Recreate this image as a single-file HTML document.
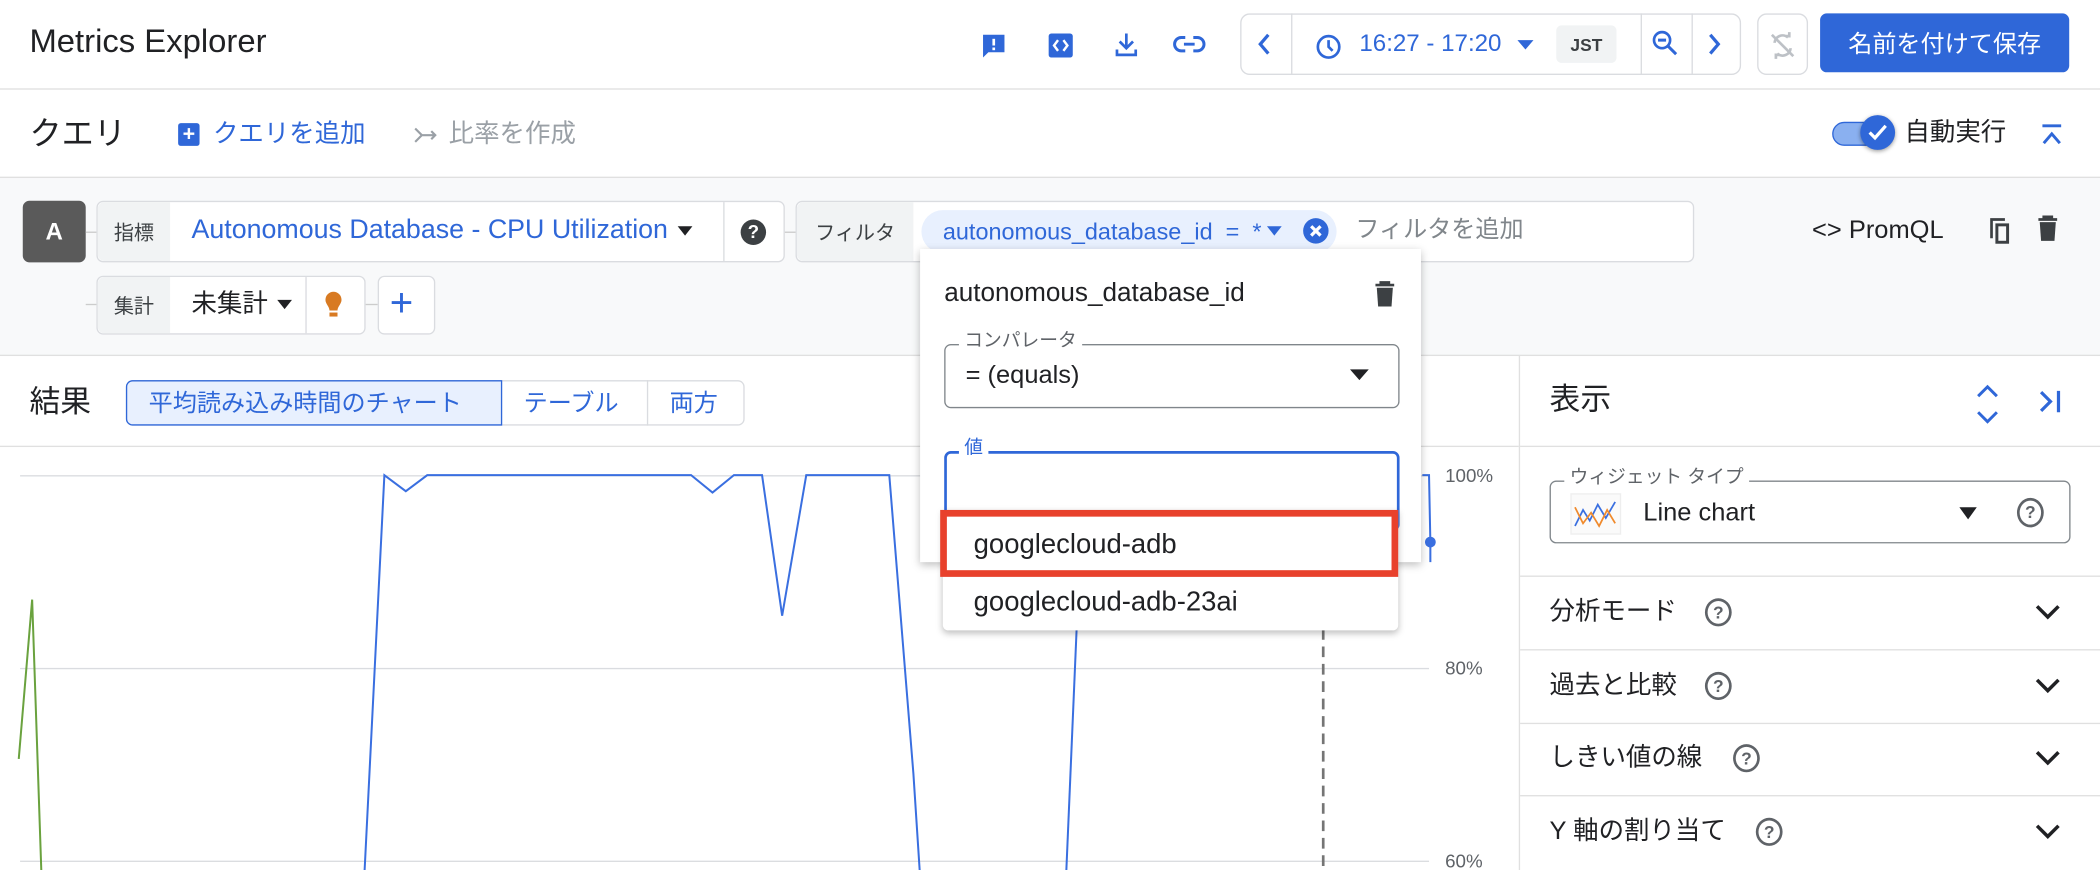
<!DOCTYPE html>
<html><head><meta charset="utf-8"><style>
*{box-sizing:border-box;margin:0;padding:0}
html,body{width:2100px;height:870px;overflow:hidden;background:#fff}
body{font-family:"Liberation Sans","Noto Sans CJK JP",sans-serif;color:#202124}
#w{position:absolute;left:0;top:0;width:1568px;height:650px;transform:scale(1.33929,1.33846);transform-origin:0 0;overflow:hidden}
.a{position:absolute}
.t{position:absolute;white-space:nowrap;line-height:1}
.blue{color:#2f67d8}
.box{position:absolute;border:1px solid #dadce0;border-radius:5px;background:#fff}
.lbl{position:absolute;background:#f1f3f4;color:#3c4043;font-size:15px;display:flex;align-items:center;justify-content:center;border-radius:5px 0 0 5px}
.hl{position:absolute;height:1px;background:#dadce0}
.acc{position:absolute;left:1135px;width:433px;height:1px;background:#e0e0e0}
svg{position:absolute;overflow:visible}
</style></head><body><div id="w">
<!-- top bar -->
<div class="t" style="left:22px;top:20px;font-size:24.5px">Metrics Explorer</div>
<svg style="left:732px;top:24px" width="20" height="20" viewBox="0 0 20 20"><path d="M2 2h16v13H6l-4 4z" fill="#2f67d8"/><rect x="9" y="5" width="2" height="5" fill="#fff"/><rect x="9" y="11.5" width="2" height="2" fill="#fff"/></svg>
<svg style="left:782px;top:24px" width="20" height="20" viewBox="0 0 20 20"><rect x="1" y="1" width="18" height="18" rx="2" fill="#2f67d8"/><path d="M8 6l-3 4 3 4M12 6l3 4-3 4" stroke="#fff" stroke-width="1.8" fill="none"/></svg>
<svg style="left:831px;top:23px" width="20" height="20" viewBox="0 0 20 20"><path d="M10 2v11M5 8l5 5 5-5M3 14v4h14v-4" stroke="#2f67d8" stroke-width="2" fill="none"/></svg>
<svg style="left:876px;top:23px" width="24" height="20" viewBox="0 0 24 20"><path d="M9 5H6a5 5 0 0 0 0 10h3M15 5h3a5 5 0 0 1 0 10h-3M8 10h8" stroke="#2f67d8" stroke-width="2.2" fill="none"/></svg>
<div class="box" style="left:926px;top:10px;width:374px;height:46px;border-radius:7px"></div>
<div class="a" style="left:964px;top:10px;width:1px;height:46px;background:#dadce0"></div>
<div class="a" style="left:1225px;top:10px;width:1px;height:46px;background:#dadce0"></div>
<div class="a" style="left:1263px;top:10px;width:1px;height:46px;background:#dadce0"></div>
<svg style="left:938px;top:24px" width="12" height="18" viewBox="0 0 12 18"><path d="M9 2L3 9l6 7" stroke="#2f67d8" stroke-width="2.4" fill="none"/></svg>
<svg style="left:982px;top:25px" width="20" height="20" viewBox="0 0 20 20"><circle cx="10" cy="10" r="8" stroke="#2f67d8" stroke-width="2" fill="none"/><path d="M10 5v5l3 3" stroke="#2f67d8" stroke-width="2" fill="none"/></svg>
<div class="t blue" style="left:1015px;top:23px;font-size:18px">16:27 - 17:20</div>
<svg style="left:1133px;top:30px" width="12" height="8"><path d="M0 0h12L6 7z" fill="#2f67d8"/></svg>
<div class="a" style="left:1162px;top:19px;width:45px;height:28px;background:#f1f3f4;border-radius:4px;font-size:13px;font-weight:bold;color:#3c4043;display:flex;align-items:center;justify-content:center">JST</div>
<svg style="left:1233px;top:22px" width="22" height="22" viewBox="0 0 22 22"><circle cx="8" cy="8" r="6" stroke="#2f67d8" stroke-width="2" fill="none"/><path d="M5 8h6M12.5 12.5l6 6" stroke="#2f67d8" stroke-width="2.2"/></svg>
<svg style="left:1274px;top:24px" width="12" height="18" viewBox="0 0 12 18"><path d="M3 2l6 7-6 7" stroke="#2f67d8" stroke-width="2.4" fill="none"/></svg>
<div class="box" style="left:1312px;top:10px;width:38px;height:46px;border-radius:7px"></div>
<svg style="left:1320px;top:23px" width="22" height="22" viewBox="0 0 22 22"><path d="M5 9a6 6 0 0 1 10-4M17 13a6 6 0 0 1-10 4M3 3l16 16M13 4h3v-3M9 18H6v3" stroke="#bdc1c6" stroke-width="2" fill="none"/></svg>
<div class="a" style="left:1359px;top:10px;width:186px;height:44px;background:#2f67d8;border-radius:5px;color:#fff;font-size:18px;display:flex;align-items:center;justify-content:center">名前を付けて保存</div>
<div class="hl" style="left:0;top:66px;width:1568px;background:#e0e0e0"></div>
<!-- row 2 -->
<div class="t" style="left:22px;top:89px;font-size:24px">クエリ</div>
<div class="a" style="left:133px;top:92px;width:16px;height:17px;background:#2f67d8;border-radius:2px;color:#fff;font-size:16px;font-weight:bold;line-height:17px;text-align:center">+</div>
<div class="t blue" style="left:159px;top:91px;font-size:19px">クエリを追加</div>
<svg style="left:309px;top:94px" width="18" height="14" viewBox="0 0 18 14"><path d="M1 2l5 5-5 5M6 7h10M13 4l3 3-3 3" stroke="#9aa0a6" stroke-width="1.6" fill="none"/></svg>
<div class="t" style="left:335px;top:91px;font-size:19px;color:#9aa0a6">比率を作成</div>
<div class="a" style="left:1368px;top:91px;width:40px;height:18px;background:#8ab0f0;border-radius:9px;border:1px solid #2f67d8"></div>
<div class="a" style="left:1389px;top:86px;width:26px;height:26px;background:#2f67d8;border-radius:50%;box-shadow:0 1px 3px rgba(0,0,0,.4)"></div>
<svg style="left:1394px;top:91px" width="16" height="16"><path d="M2 8l4 4 8-9" stroke="#fff" stroke-width="2.4" fill="none"/></svg>
<div class="t" style="left:1422px;top:90px;font-size:19px">自動実行</div>
<svg style="left:1523px;top:92px" width="18" height="18"><path d="M2 2h14M3 15l6-7 6 7" stroke="#2f67d8" stroke-width="2.2" fill="none"/></svg>
<div class="a" style="left:0;top:132px;width:1568px;height:134px;background:#f8f9fa;border-top:1px solid #e0e0e0;border-bottom:1px solid #e0e0e0"></div>
<!-- query row -->
<div class="a" style="left:17px;top:150px;width:47px;height:46px;background:#5a5a5a;border-radius:5px;color:#fff;font-size:18px;font-weight:bold;display:flex;align-items:center;justify-content:center">A</div>
<div class="hl" style="left:64px;top:173px;width:8px;background:#ccc"></div>
<div class="box" style="left:72px;top:150px;width:514px;height:46px"></div>
<div class="lbl" style="left:73px;top:151px;width:54px;height:44px">指標</div>
<div class="t blue" style="left:143px;top:162px;font-size:20px">Autonomous Database - CPU Utilization</div>
<svg style="left:506px;top:169px" width="11" height="7"><path d="M0 0h11L5.5 7z" fill="#202124"/></svg>
<div class="a" style="left:540px;top:151px;width:1px;height:44px;background:#dadce0"></div>
<div class="a" style="left:553px;top:164px;width:19px;height:19px;border-radius:50%;background:#3c4043;color:#fff;font-size:14px;font-weight:bold;text-align:center;line-height:19px">?</div>
<div class="hl" style="left:586px;top:173px;width:8px;background:#ccc"></div>
<div class="box" style="left:594px;top:150px;width:671px;height:46px"></div>
<div class="lbl" style="left:595px;top:151px;width:87px;height:44px">フィルタ</div>
<div class="a" style="left:688px;top:157px;width:310px;height:32px;background:#e8f0fe;border-radius:16px"></div>
<div class="t blue" style="left:704px;top:165px;font-size:17.5px">autonomous_database_id&nbsp; = &nbsp;*</div>
<svg style="left:946px;top:169px" width="11" height="7"><path d="M0 0h11L5.5 7z" fill="#2f67d8"/></svg>
<div class="a" style="left:973px;top:163px;width:19px;height:19px;border-radius:50%;background:#2f67d8"></div>
<svg style="left:973px;top:163px" width="19" height="19"><path d="M6 6l7 7M13 6l-7 7" stroke="#fff" stroke-width="2.4"/></svg>
<div class="t" style="left:1012px;top:162px;font-size:18px;color:#80868b">フィルタを追加</div>
<div class="t" style="left:1353px;top:163px;font-size:19px;color:#202124">&lt;&gt; PromQL</div>
<svg style="left:1484px;top:161px" width="18" height="22" viewBox="0 0 18 22"><path d="M3 17V3h10" stroke="#3c4043" stroke-width="2" fill="none"/><rect x="7" y="7" width="8" height="13" stroke="#3c4043" stroke-width="2.2" fill="none"/></svg>
<svg style="left:1521px;top:161px" width="16" height="20" viewBox="0 0 16 20"><path d="M1 3h14M5 3V1h6v2" stroke="#3c4043" stroke-width="2" fill="none"/><path d="M2 5h12l-1 14H3z" fill="#3c4043"/></svg>
<div class="hl" style="left:64px;top:227px;width:8px;background:#ccc"></div>
<div class="box" style="left:72px;top:206px;width:201px;height:44px"></div>
<div class="lbl" style="left:73px;top:207px;width:54px;height:42px">集計</div>
<div class="t" style="left:143px;top:218px;font-size:19px">未集計</div>
<svg style="left:207px;top:224px" width="11" height="7"><path d="M0 0h11L5.5 7z" fill="#202124"/></svg>
<div class="a" style="left:228px;top:207px;width:1px;height:42px;background:#dadce0"></div>
<svg style="left:242px;top:217px" width="14" height="22" viewBox="0 0 14 22"><path d="M7 1a6 6 0 0 0-6 6c0 3 3 5 3 8h6c0-3 3-5 3-8a6 6 0 0 0-6-6z" fill="#d87a22"/><rect x="4" y="16.5" width="6" height="3" fill="#d87a22"/></svg>
<div class="hl" style="left:273px;top:227px;width:9px;background:#ccc"></div>
<div class="box" style="left:282px;top:206px;width:43px;height:44px"></div>
<div class="t blue" style="left:291px;top:212px;font-size:30px">+</div>
<!-- results -->
<div class="t" style="left:22px;top:289px;font-size:23px">結果</div>
<div class="box" style="left:94px;top:284px;width:462px;height:34px;border-radius:5px"></div>
<div class="a" style="left:94px;top:284px;width:281px;height:34px;background:#e8f0fe;border:1px solid #2f67d8;border-radius:5px 0 0 5px"></div>
<div class="a" style="left:483px;top:284px;width:1px;height:34px;background:#dadce0"></div>
<div class="t blue" style="left:111px;top:292px;font-size:18px">平均読み込み時間のチャート</div>
<div class="t blue" style="left:391px;top:292px;font-size:18px">テーブル</div>
<div class="t blue" style="left:500px;top:292px;font-size:18px">両方</div>
<div class="hl" style="left:0;top:333px;width:1134px;background:#e0e0e0"></div>
<!-- chart -->
<div class="hl" style="left:15px;top:355px;width:1052px"></div>
<div class="hl" style="left:15px;top:499px;width:1052px"></div>
<div class="hl" style="left:15px;top:643px;width:1052px"></div>
<div class="t" style="left:1079px;top:348px;font-size:14px;color:#5f6368">100%</div>
<div class="t" style="left:1079px;top:492px;font-size:14px;color:#5f6368">80%</div>
<div class="t" style="left:1079px;top:636px;font-size:14px;color:#5f6368">60%</div>
<svg style="left:0;top:0" width="1568" height="650">
<path d="M14 567L24 448L31 655" stroke="#6aa23e" stroke-width="1.5" fill="none"/>
<path d="M272 655L287 355L303 367L319 355L516 355L532 368L548 355L569 355L584 460L602 355L664 355L682 578L687 655" stroke="#3a6fe0" stroke-width="1.5" fill="none"/>
<path d="M796 655L806 420" stroke="#3a6fe0" stroke-width="1.5" fill="none"/>
<path d="M1062 355L1067 355L1068 405L1068 420" stroke="#3a6fe0" stroke-width="1.5" fill="none"/>
<circle cx="1068" cy="405" r="4" fill="#3a6fe0"/>
<path d="M988 470V650" stroke="#757575" stroke-width="2" stroke-dasharray="8 5"/>
</svg>
<!-- right panel -->
<div class="a" style="left:1134px;top:266px;width:1px;height:384px;background:#e0e0e0"></div>
<div class="t" style="left:1157px;top:287px;font-size:23px">表示</div>
<svg style="left:1475px;top:287px" width="18" height="30"><path d="M2 9l7-7 7 7M2 21l7 7 7-7" stroke="#2f67d8" stroke-width="2.2" fill="none"/></svg>
<svg style="left:1522px;top:290px" width="18" height="20"><path d="M2 3l7 7-7 7M15 2v16" stroke="#2f67d8" stroke-width="2.4" fill="none"/></svg>
<div class="hl" style="left:1135px;top:333px;width:433px;background:#e0e0e0"></div>
<div class="a" style="left:1157px;top:359px;width:389px;height:47px;border:1px solid #80868b;border-radius:5px"></div>
<div class="t" style="left:1168px;top:349px;font-size:14px;color:#5f6368;background:#fff;padding:0 4px">ウィジェット タイプ</div>
<svg style="left:1173px;top:369px" width="37" height="30"><rect width="37" height="30" fill="#fafafa" stroke="#eee"/><path d="M3 24L9 12L14 20L20 8L26 18L33 6" stroke="#3a6fe0" stroke-width="1.3" fill="none"/><path d="M3 10L9 22L15 14L21 24L27 12L33 22" stroke="#f08a2c" stroke-width="1.3" fill="none"/></svg>
<div class="t" style="left:1227px;top:374px;font-size:19px">Line chart</div>
<svg style="left:1463px;top:379px" width="13" height="9"><path d="M0 0h13L6.5 9z" fill="#202124"/></svg>
<div class="a" style="left:1506px;top:372px;width:20px;height:22px;border:2px solid #5f6368;border-radius:50%;font-size:13px;text-align:center;line-height:18px;color:#5f6368;font-weight:bold">?</div>
<div class="acc" style="top:430px"></div>
<div class="t" style="left:1157px;top:448px;font-size:19px">分析モード</div>
<div class="acc" style="top:485px"></div>
<div class="t" style="left:1157px;top:503px;font-size:19px">過去と比較</div>
<div class="acc" style="top:540px"></div>
<div class="t" style="left:1157px;top:557px;font-size:19px">しきい値の線</div>
<div class="acc" style="top:594px"></div>
<div class="t" style="left:1157px;top:612px;font-size:19px">Y 軸の割り当て</div>
<div class="a" style="left:1273px;top:447px;width:20px;height:21px;border:2px solid #5f6368;border-radius:50%;font-size:13px;text-align:center;line-height:17px;color:#5f6368;font-weight:bold">?</div>
<div class="a" style="left:1273px;top:502px;width:20px;height:21px;border:2px solid #5f6368;border-radius:50%;font-size:13px;text-align:center;line-height:17px;color:#5f6368;font-weight:bold">?</div>
<div class="a" style="left:1294px;top:556px;width:20px;height:21px;border:2px solid #5f6368;border-radius:50%;font-size:13px;text-align:center;line-height:17px;color:#5f6368;font-weight:bold">?</div>
<div class="a" style="left:1311px;top:611px;width:20px;height:21px;border:2px solid #5f6368;border-radius:50%;font-size:13px;text-align:center;line-height:17px;color:#5f6368;font-weight:bold">?</div>
<svg style="left:1519px;top:451px" width="20" height="12"><path d="M2 2l8 8 8-8" stroke="#202124" stroke-width="2.6" fill="none"/></svg>
<svg style="left:1519px;top:506px" width="20" height="12"><path d="M2 2l8 8 8-8" stroke="#202124" stroke-width="2.6" fill="none"/></svg>
<svg style="left:1519px;top:560px" width="20" height="12"><path d="M2 2l8 8 8-8" stroke="#202124" stroke-width="2.6" fill="none"/></svg>
<svg style="left:1519px;top:615px" width="20" height="12"><path d="M2 2l8 8 8-8" stroke="#202124" stroke-width="2.6" fill="none"/></svg>
<!-- popup -->
<div class="a" style="left:687px;top:186px;width:374px;height:234px;background:#fff;box-shadow:0 2px 6px rgba(0,0,0,.25)"></div>
<div class="t" style="left:705px;top:210px;font-size:19.5px">autonomous_database_id</div>
<svg style="left:1026px;top:210px" width="16" height="20" viewBox="0 0 16 20"><path d="M1 3h14M5 3V1h6v2" stroke="#3c4043" stroke-width="2" fill="none"/><path d="M2 5h12l-1 14H3z" fill="#3c4043"/></svg>
<div class="a" style="left:705px;top:257px;width:340px;height:48px;border:1px solid #80868b;border-radius:5px"></div>
<div class="t" style="left:716px;top:247px;font-size:14px;color:#5f6368;background:#fff;padding:0 4px">コンパレータ</div>
<div class="t" style="left:721px;top:271px;font-size:19px">= (equals)</div>
<svg style="left:1008px;top:276px" width="14" height="8"><path d="M0 0h14L7 8z" fill="#202124"/></svg>
<div class="a" style="left:705px;top:337px;width:340px;height:60px;border:2px solid #2f67d8;border-radius:5px"></div>
<div class="t" style="left:716px;top:327px;font-size:14px;color:#2f67d8;background:#fff;padding:0 4px">値</div>
<div class="a" style="left:704px;top:381px;width:340px;height:90px;background:#fff;box-shadow:0 2px 5px rgba(0,0,0,.25);border-radius:0 0 4px 4px"></div>
<div class="t" style="left:727px;top:397px;font-size:20.5px">googlecloud-adb</div>
<div class="t" style="left:727px;top:440px;font-size:20.5px">googlecloud-adb-23ai</div>
<div class="a" style="left:702px;top:381px;width:342px;height:50px;border:5px solid #e8412c"></div>
</div></body></html>
